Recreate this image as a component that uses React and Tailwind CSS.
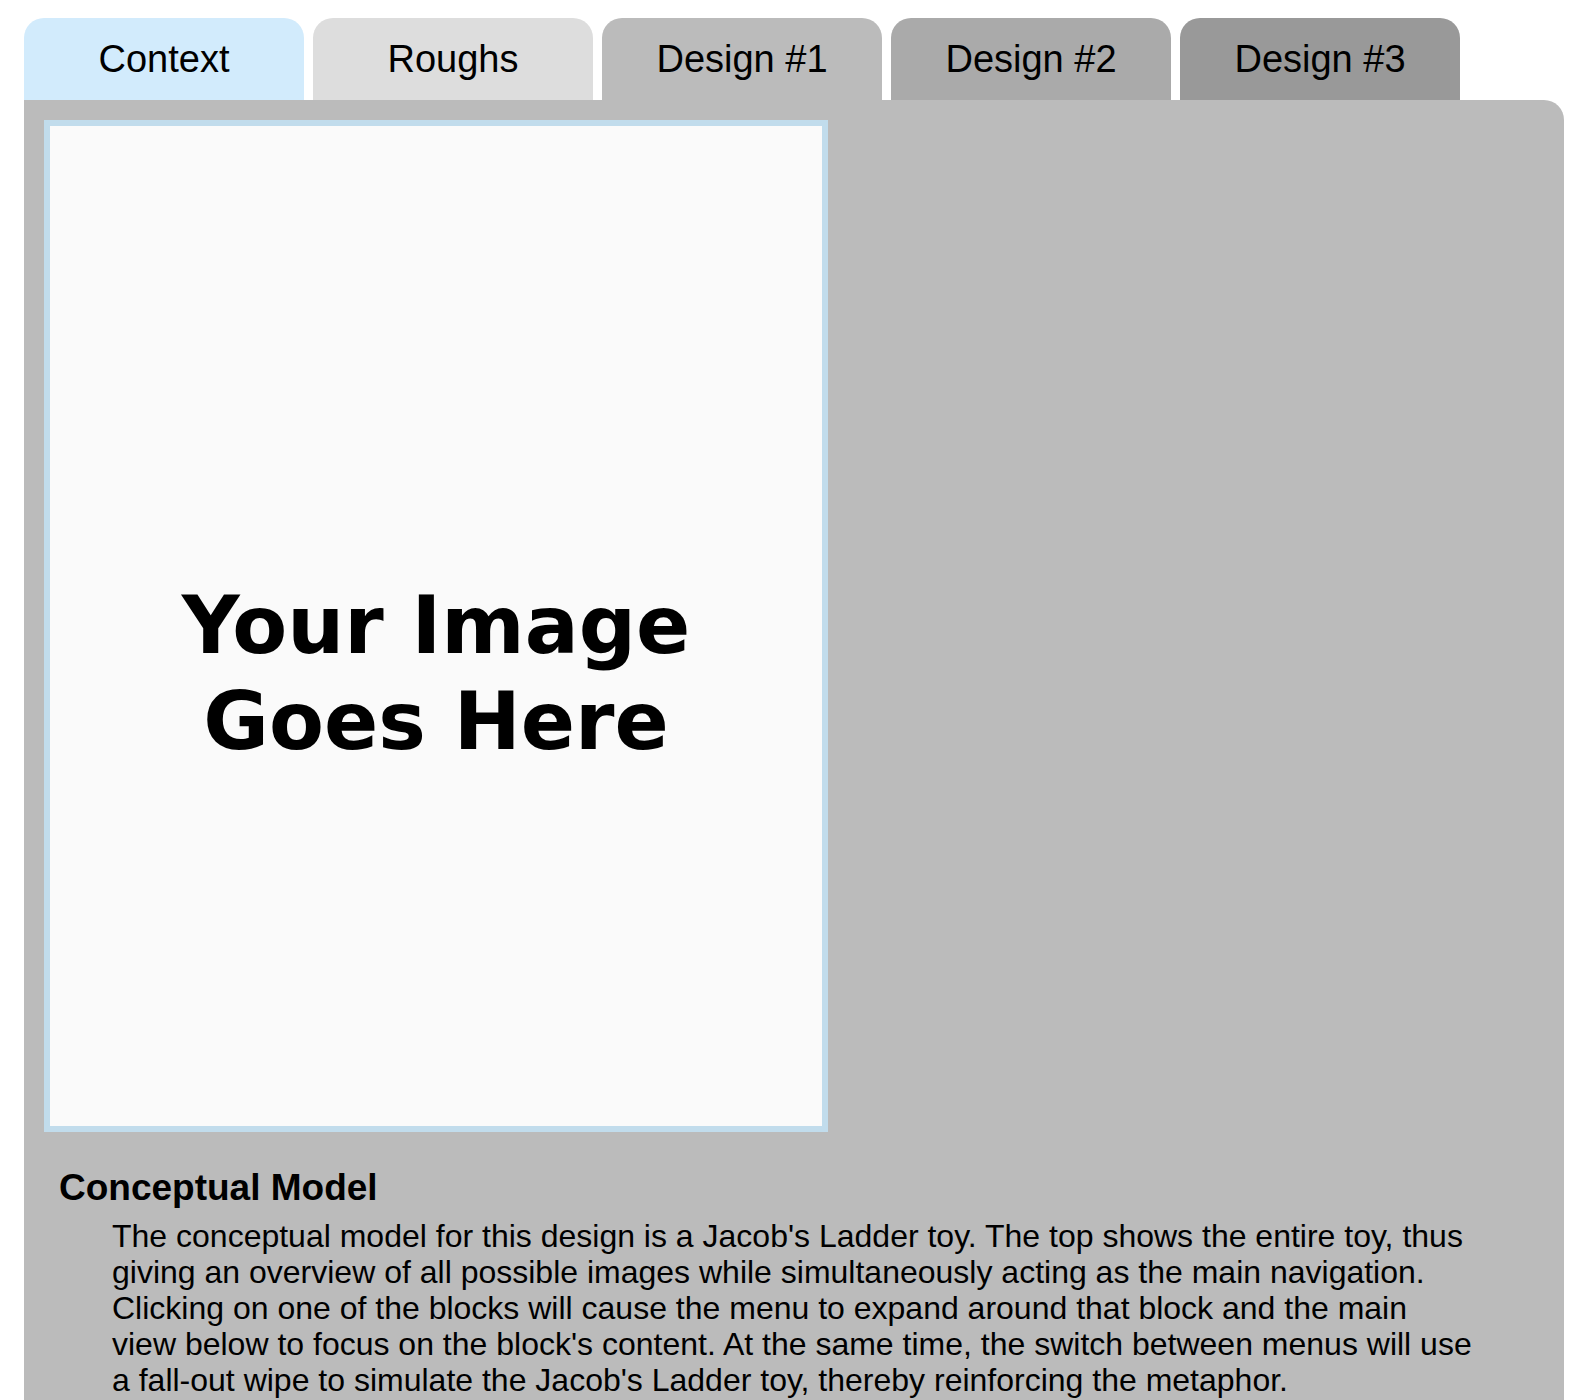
import React from 'react';

const tabs = [
  { label: 'Context', bg: 'bg-[#d2ebfc]' },
  { label: 'Roughs', bg: 'bg-[#dddddd]' },
  { label: 'Design #1', bg: 'bg-[#bbbbbb]' },
  { label: 'Design #2', bg: 'bg-[#aaaaaa]' },
  { label: 'Design #3', bg: 'bg-[#999999]' },
];

const lines = [
  "The conceptual model for this design is a Jacob's Ladder toy. The top shows the entire toy, thus",
  'giving an overview of all possible images while simultaneously acting as the main navigation.',
  'Clicking on one of the blocks will cause the menu to expand around that block and the main',
  "view below to focus on the block's content. At the same time, the switch between menus will use",
  "a fall-out wipe to simulate the Jacob's Ladder toy, thereby reinforcing the metaphor.",
];

const App = () => {
  return (
    <div className="min-h-screen bg-white pt-[18px] pl-[24px] pb-[40px] text-black font-['Liberation_Sans',Arial,sans-serif]">
      {/* Tabs */}
      <div className="flex gap-[9px]">
        {tabs.map((tab) => (
          <div
            key={tab.label}
            className={`w-[280px] h-[82px] rounded-t-[20px] flex items-center justify-center text-[38px] ${tab.bg}`}
          >
            {tab.label}
          </div>
        ))}
      </div>

      {/* Panel */}
      <div className="w-[1540px] bg-[#bbbbbb] rounded-tr-[20px] p-[20px] pb-[60px]">
        <div className="w-[784px] h-[1012px] border-[6px] border-[#c1dcec] bg-[#fafafa] flex justify-center pt-[452px]">
          <p className="text-center text-[80px] leading-[96px] font-bold font-['DejaVu_Sans',Verdana,sans-serif]">
            Your Image
            <br />
            Goes Here
          </p>
        </div>

        <dl className="mt-[34px] ml-[15px]">
          <dt className="text-[37px] font-bold leading-[44px]">Conceptual Model</dt>
          <dd className="ml-[53px] mt-[8px] text-[32px] leading-[36px]">
            {lines.map((line, i) => (
              <span key={i} className="block whitespace-nowrap">
                {line}
              </span>
            ))}
          </dd>
        </dl>
      </div>
    </div>
  );
};

export default App;
